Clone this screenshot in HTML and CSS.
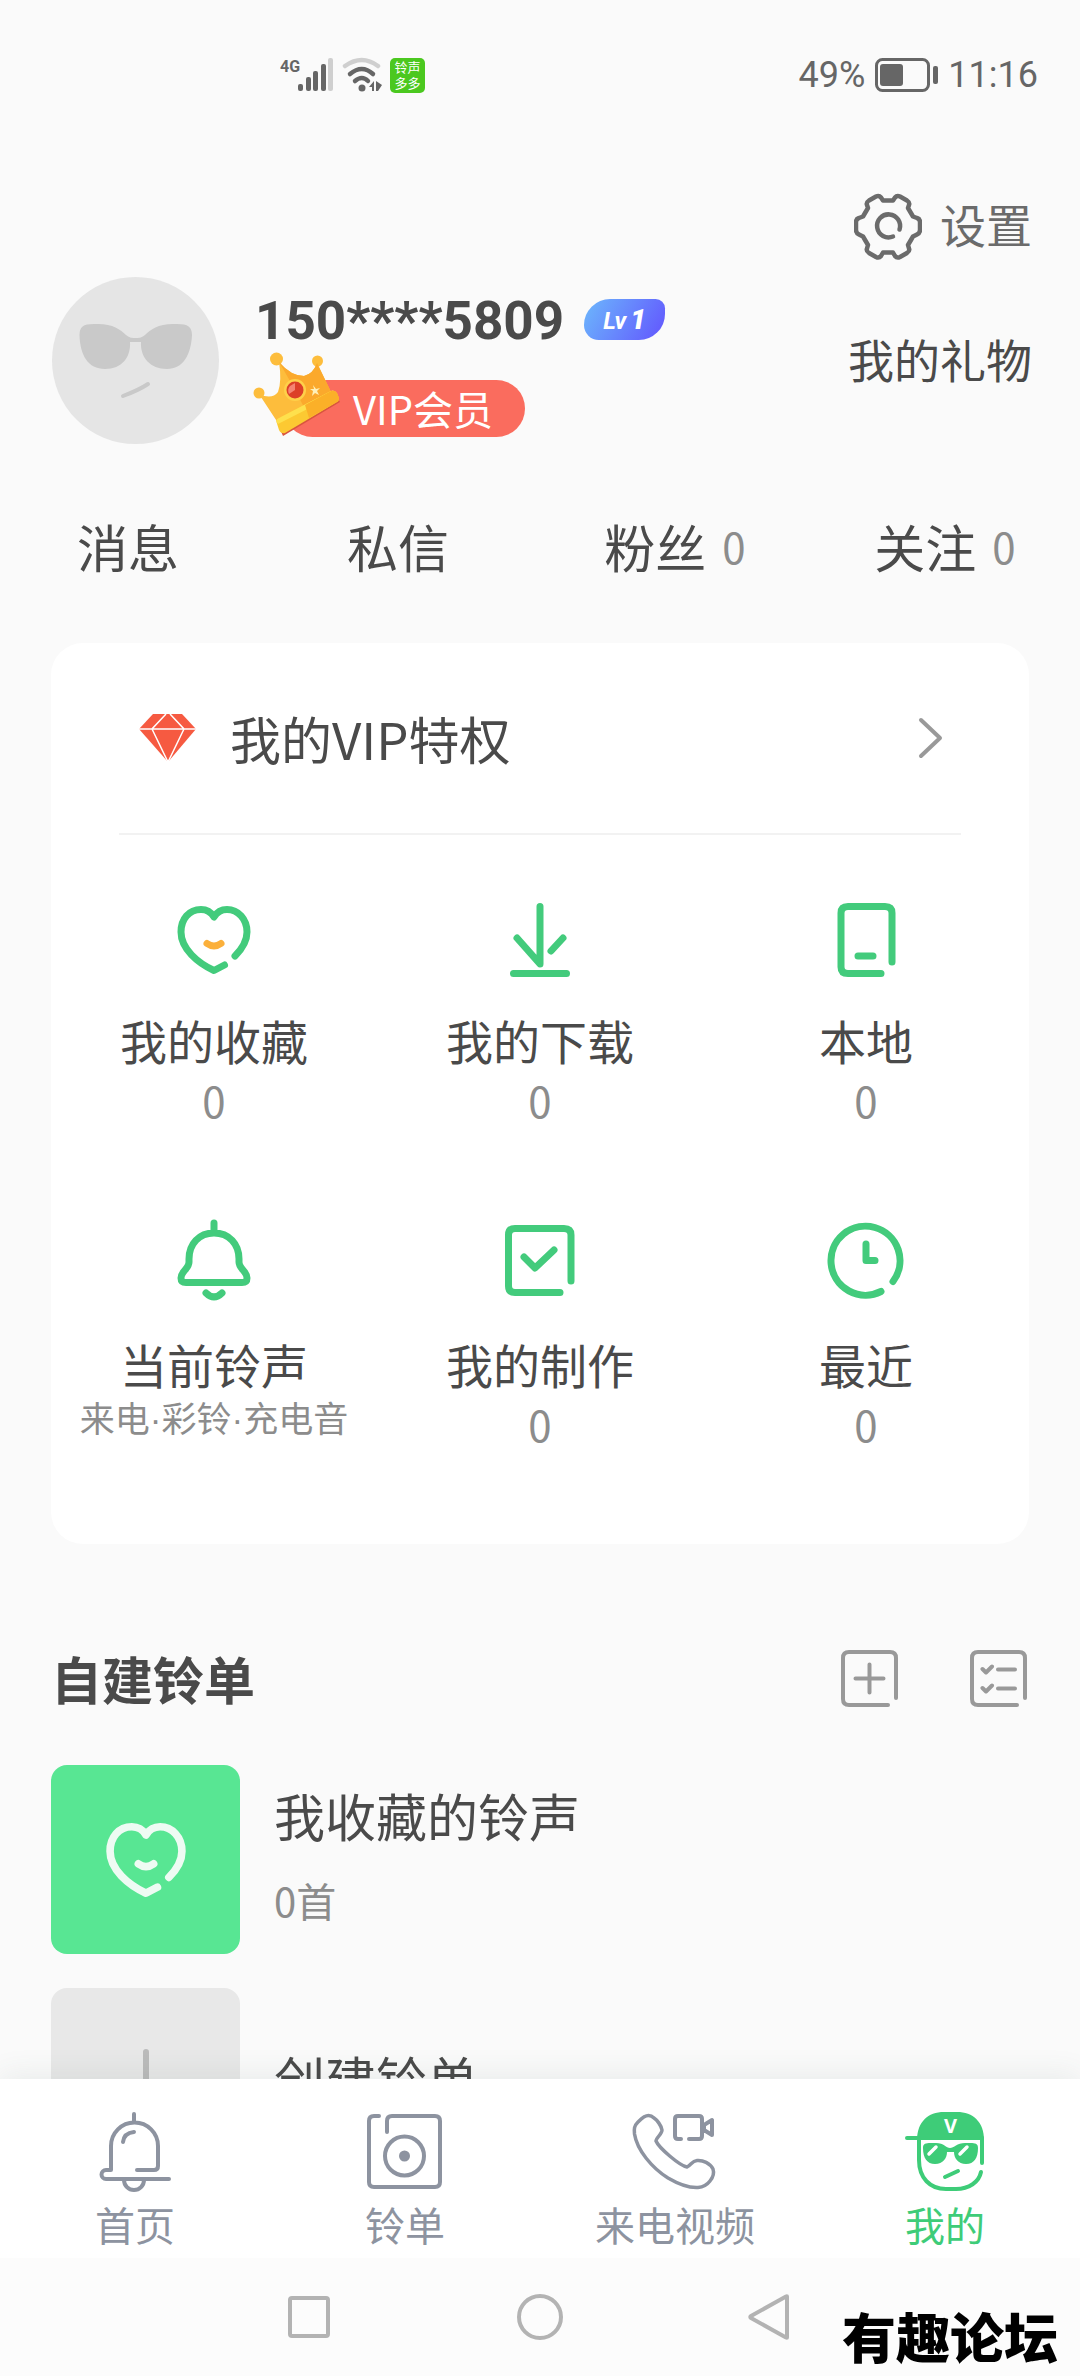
FILE: index.html
```html
<!DOCTYPE html>
<html lang="zh-CN">
<head>
<meta charset="utf-8">
<meta name="viewport" content="width=device-width, initial-scale=1">
<title>我的</title>
<link rel="stylesheet" href="styles.css">
</head>
<body>
<svg class="defs" width="0" height="0" aria-hidden="true">
  <symbol id="heart" viewBox="0 0 90 90">
    <path d="M66 61C74 53 78 46 78 37C78 24 69 14.500 58 14.500C52 14.500 48 17 45 22C42 17 38 14.500 32 14.500C20 14.500 12 24 12 37C12 54 29 68 45 75.500L55.500 70"/>
    <path class="smile" d="M38 48.500Q45 53.500 52 48.500"/>
  </symbol>
</svg>

<div class="status-bar">
  <div class="status-left">
    <svg width="54" height="40" viewBox="0 -2 54 40" aria-label="4G">
      <text class="net-label" x="0" y="15">4G</text>
      <g fill="#666"><rect x="18" y="27" width="5" height="7" rx="2"/><rect x="26" y="20" width="5" height="14" rx="2"/><rect x="33" y="14" width="5" height="20" rx="2"/><rect x="41" y="7" width="5" height="27" rx="2"/></g>
      <rect x="48" y="1" width="5" height="33" rx="2" fill="#cfcfcf"/>
    </svg>
    <svg width="40" height="36" viewBox="0 0 40 36" fill="none" stroke-linecap="round" stroke-width="4.500" aria-hidden="true">
      <path d="M3 9Q20 -3 36 9" stroke="#cfcfcf"/>
      <path d="M8 17Q20 7 31 17M13 24Q20 18 26 24" stroke="#666"/>
      <circle cx="20" cy="31" r="3.500" fill="#666"/>
      <path d="M27 30L32 24V34H30V30ZM34 24L40 28L36 34H34Z" fill="#666"/>
    </svg>
    <span class="app-badge">铃声<br>多多</span>
  </div>
  <div class="status-right">
    <span>49%</span>
    <svg width="63" height="34" viewBox="0 0 63 34" aria-hidden="true">
      <rect x="1.500" y="1.500" width="52" height="31" rx="6" fill="none" stroke="#666" stroke-width="3"/>
      <rect x="5" y="6" width="23" height="22" rx="3" fill="#666"/>
      <rect x="58" y="8" width="5" height="18" rx="2" fill="#666"/>
    </svg>
    <span>11:16</span>
  </div>
</div>

<main class="content">
  <header>
    <a class="settings" href="#settings">
      <svg width="68" height="67" viewBox="0 0 68 67" fill="none" stroke="#6b6b6b" stroke-width="4.500" stroke-linecap="round" stroke-linejoin="round" aria-hidden="true">
        <path d="M29 7.500H39L41 4.500Q43 2 46 3.500L53 7.500Q56 9.500 55 12L54 15L59 23.500L63 25Q66 26 66 29V37Q66 40 63 41.500L59 43.500L54 52L55 55.500Q56 58 53 60L46 64Q43 65.500 41 63L39 59.500H29L27 63Q25 65.500 22 64L15 60Q12 58 13 55.500L14 52L9 43.500L5 41.500Q2 40 2 37V29Q2 26 5 25L9 23.500L14 15L13 12Q12 9.500 15 7.500L22 3.500Q25 2 27 4.500Z"/>
        <path d="M45.500 36.500A11.500 11.500 0 1 0 39 43.500"/>
      </svg>
      <span class="link-text">设置</span>
    </a>
    <section class="profile">
      <svg class="avatar" width="167" height="167" viewBox="0 0 167 167" role="img" aria-label="头像">
        <circle cx="83.500" cy="83.500" r="83.500" fill="#e5e5e5"/>
        <path d="M27.500 58C27.500 50 31 47 42 47C60 46 68 52 74 58C78 61 80 61 83.500 61C87 61 89 61 93 58C99 52 107 46 125 47C136 47 140 50 140 58C139 78 131 92 115 92C98 92 88 80 89 65H78C79 80 70 92 53 92C36 92 28 78 27.500 58Z" fill="#c9c9c9"/>
        <path d="M71 119Q87 113 96 107" fill="none" stroke="#c9c9c9" stroke-width="4" stroke-linecap="round"/>
      </svg>
      <div class="identity">
        <div class="name-row">
          <h1 class="name">150****5809</h1>
          <span class="level">Lv<b>1</b></span>
        </div>
        <a class="vip-pill" href="#vip">
          <svg class="crown" width="88" height="86" viewBox="0 0 88 86" aria-hidden="true">
            <path d="M24 70L82 42L87 50L30 84Z" fill="#d9543f"/>
            <g fill="#fdbd3c"><circle cx="23.500" cy="7" r="6.500"/><circle cx="64.500" cy="9" r="5.500"/><circle cx="6" cy="41" r="5.500"/>
            <path d="M6 42Q19 48 25 40Q29 29 26 10Q38 24 51 24Q60 22 64 11L79 42L25 71Z"/></g>
            <path d="M26 10Q38 24 51 24Q60 22 64 11L79 42L52 57Q38 30 26 10Z" fill="#fba92c"/>
            <path d="M23.500 70Q23 67 26 66L78 39Q82 38 84 41L86 46Q86 49 84 50L32 81Q28 82 26 78Z" fill="#fcc932"/>
            <path d="M25 72L84 42L81 39Q80 38 78 39L26 66Q23 67 23.500 70Z" fill="#fee04d"/>
            <path d="M52 53L78 39Q82 38 84 41L86 46Q86 49 84 50L56 66Z" fill="#fbb028"/>
            <circle cx="42" cy="38" r="11" fill="#fed04a"/><circle cx="42" cy="38" r="8.500" fill="#dc3f28"/>
            <path d="M37 34L42 31V38L36 42Q34 37 37 34Z" fill="#f58472"/>
            <path d="M60 33L63 37L67 36L64 39L66 43L62 41L59 44L60 39L57 37L61 37Z" fill="#fff0b8"/>
          </svg>
          VIP会员
        </a>
      </div>
      <a class="gifts link-text" href="#gifts">我的礼物</a>
    </section>
  </header>

  <nav class="social">
    <a class="plain" href="#messages">消息</a>
    <a class="plain" href="#chats">私信</a>
    <a href="#fans">粉丝<span class="count">0</span></a>
    <a href="#following">关注<span class="count">0</span></a>
  </nav>

  <section class="card">
    <a class="vip-row" href="#privileges">
      <svg width="57" height="50" viewBox="0 0 57 50" aria-hidden="true">
        <path d="M14 1H43L57 16L29 49L0 16Z" fill="#f65a41"/>
        <path d="M0 16H57M27 1L13 16L29 49L45 16L31 1" fill="none" stroke="#fff" stroke-width="1.500"/>
      </svg>
      <span class="vip-title">我的VIP特权</span>
      <svg width="25" height="42" viewBox="0 0 25 42" fill="none" stroke="#999" stroke-width="4" stroke-linecap="round" stroke-linejoin="round" aria-hidden="true"><path d="M3 3L22 21L3 39"/></svg>
    </a>
    <div class="grid">
      <a class="cell" href="#favorites">
        <svg class="icon" viewBox="0 0 90 90" aria-hidden="true"><use href="#heart"/></svg>
        <span class="label">我的收藏</span><span class="count">0</span>
      </a>
      <a class="cell" href="#downloads">
        <svg class="icon" viewBox="0 0 90 90" aria-hidden="true"><path d="M45 11.500V69L22 43M68 43L56 56M18.500 78.500H71.500"/></svg>
        <span class="label">我的下载</span><span class="count">0</span>
      </a>
      <a class="cell" href="#local">
        <svg class="icon" viewBox="0 0 90 90" aria-hidden="true"><path d="M71 67V18Q71 11.500 64 11.500H27Q20 11.500 20 18V72Q20 78.500 27 78.500H60M37 61H52"/></svg>
        <span class="label">本地</span><span class="count">0</span>
      </a>
      <a class="cell" href="#current">
        <svg class="icon" viewBox="0 0 90 90" aria-hidden="true"><path d="M45 4V14M45 14C30 14 20 25 20 40V43C20 50 12 52 12 59Q12 63.500 17 63.500H73Q78 63.500 78 59C78 52 70 50 70 43V40C70 25 60 14 45 14ZM37 74Q45 82 53 74"/></svg>
        <span class="label">当前铃声</span><span class="note">来电·彩铃·充电音</span>
      </a>
      <a class="cell" href="#works">
        <svg class="icon" viewBox="0 0 90 90" aria-hidden="true"><path d="M76 62V16Q76 9.500 69 9.500H20Q13.500 9.500 13.500 16V67Q13.500 73.500 20 73.500H65M29 38L40 49L59 31"/></svg>
        <span class="label">我的制作</span><span class="count">0</span>
      </a>
      <a class="cell" href="#recent">
        <svg class="icon" viewBox="0 0 90 90" aria-hidden="true"><path d="M72 62.500A34.500 34.500 0 1 0 60 72.500M45 25V41.500H54"/></svg>
        <span class="label">最近</span><span class="count">0</span>
      </a>
    </div>
  </section>

  <section class="playlists">
    <div class="section-head">
      <h2>自建铃单</h2>
      <button type="button" aria-label="新建铃单">
        <svg class="tool" viewBox="0 0 57 57"><path d="M55 48V8Q55 2 49 2H8Q2 2 2 8V49Q2 55 8 55H47M14.500 28.500H42.500M28.500 14.500V42.500"/></svg>
      </button>
      <button type="button" aria-label="管理铃单">
        <svg class="tool" viewBox="0 0 57 57"><path d="M55 48V8Q55 2 49 2H8Q2 2 2 8V49Q2 55 8 55H47M12.500 19L16 22.500L22 16.500M28 19.500H45M12.500 38L16 41.500L22 35.500M28 38.500H45"/></svg>
      </button>
    </div>
    <ul class="list">
      <li><a class="item" href="#liked">
        <span class="thumb liked"><svg class="icon" viewBox="0 0 90 90" aria-hidden="true"><use href="#heart"/></svg></span>
        <span class="item-text"><span class="item-title">我收藏的铃声</span><span class="item-sub">0首</span></span>
      </a></li>
      <li><a class="item" href="#create">
        <span class="thumb"><svg width="68" height="68" viewBox="0 0 68 68" stroke="#bbb" stroke-width="6" stroke-linecap="round" aria-hidden="true"><path d="M34 3V65M3 34H65"/></svg></span>
        <span class="item-text"><span class="item-title">创建铃单</span></span>
      </a></li>
    </ul>
  </section>
</main>

<nav class="tab-bar">
  <a href="#home">
    <svg class="tab-icon" viewBox="0 0 90 80" aria-hidden="true"><path d="M44 2V10M21 58V34A23.500 23.500 0 0 1 68 34V54Q68 58 64 58H47M21 58H16A4.500 4.500 0 0 0 16 67H79M34 68A9 9 0 0 0 54 68M33 30Q34 21 44 20"/></svg>
    首页
  </a>
  <a href="#playlists">
    <svg class="tab-icon" viewBox="0 0 90 80" aria-hidden="true"><path d="M19 4H14Q9 4 9 9V70Q9 75 14 75H75Q80 75 80 70V9Q80 4 75 4H32Q27 4 27 9V20"/><circle cx="44.500" cy="44" r="19.500"/><circle cx="44.500" cy="44" r="5.500" fill="#8d93a0" stroke="none"/></svg>
    铃单
  </a>
  <a href="#video">
    <svg class="tab-icon" viewBox="0 0 90 80" aria-hidden="true"><path stroke-width="3.500" d="M18.500 3.500C14 3.500 11 7 8 10C4 14 4 17 4.500 22C7 38 22 56 38 66C50 73 60 76 68 75.500C74 75 77 73 80 69C84 64 84 60 83 57C80 51 73 48 67 48.500C62 49 61 53 57 55C50 54 29 36 26 29C26 26 32 22 32 18C31 13 27 8 24 6C22 4 20 3.500 18.500 3.500Z"/><path d="M51 27H48Q45 27 45 24V7Q45 4 48 4H69Q72 4 72 7V24Q72 27 69 27H59M74 13L82 8V23L74 18Z"/></svg>
    来电视频
  </a>
  <a class="active" href="#me" aria-current="page">
    <svg class="tab-icon" viewBox="0 0 90 80" aria-hidden="true">
      <path d="M17 28C17 10 28 0 44 0H57C73 0 84 10 84 28Z" fill="#3ecc78" stroke="none"/>
      <path d="M7 26H19M19 26V48C19 66 30 77 46 77H56C69 77 79 70 81 60M82 26V51M45 65L58 59"/>
      <path d="M23 36C23 30 28 31 36 31C44 31 46 36 50 36C54 36 57 31 65 31C73 31 78 30 78 36C78 46 74 52 66 52C58 52 54 46 54 40H47C47 46 43 52 35 52C27 52 23 46 23 36Z" fill="#3ecc78" stroke="none"/>
      <path d="M29 42L36 35M60 42L67 35" stroke="#fff" stroke-width="3.500"/>
      <text class="cap-letter" x="50.500" y="21" text-anchor="middle">V</text>
    </svg>
    我的
  </a>
</nav>

<footer class="system-nav">
  <button type="button" aria-label="最近任务"><svg viewBox="0 0 46 46"><rect x="4" y="4" width="38" height="38" rx="2"/></svg></button>
  <button type="button" aria-label="主屏幕"><svg viewBox="0 0 46 46"><circle cx="23" cy="23" r="21"/></svg></button>
  <button type="button" aria-label="返回"><svg viewBox="0 0 46 46"><path d="M39 2.500V43.500Q39 44 38 43.500L3 24Q1.500 23 3 22L38 2.500Q39 2 39 2.500Z"/></svg></button>
  <span class="watermark">有趣论坛</span>
</footer>
</body>
</html>
```
FILE: styles.css
```css
* { box-sizing: border-box; }

body {
  margin: 0;
  height: 100vh;
  display: flex;
  flex-direction: column;
  background: #fafafa;
  color: #4a4a4a;
  font-family: "Noto Sans CJK SC", sans-serif;
}

a { color: inherit; text-decoration: none; }
button { padding: 0; border: 0; background: none; }
svg { display: block; flex: none; }
h1, h2, ul { margin: 0; padding: 0; }
ul { list-style: none; }
.defs { position: absolute; }

/* Status bar */
.status-bar {
  flex: none;
  height: 150px;
  padding: 0 42px 0 280px;
  display: flex;
  align-items: center;
  justify-content: space-between;
  color: #666;
  font: 36px/40px Roboto, sans-serif;
}
.status-left { display: flex; align-items: center; gap: 8px; }
.status-right { display: flex; align-items: center; gap: 10px; }
.net-label { font: bold 16px Roboto, sans-serif; fill: #666; }
.app-badge {
  width: 35px;
  height: 35px;
  padding-top: 1px;
  border-radius: 5px;
  background: #4bc81f;
  color: #fff;
  font: 13px/16px "Noto Sans CJK SC", sans-serif;
  text-align: center;
}

/* Scrolling content */
.content { flex: 1; min-height: 0; overflow: hidden; }

.settings {
  height: 76px;
  margin: 38px 48px 13px auto;
  width: fit-content;
  display: flex;
  align-items: center;
  gap: 18px;
  color: #6b6b6b;
}
.link-text { padding-bottom: 6px; font-size: 46px; line-height: 70px; }

.profile { display: flex; padding: 0 48px 0 52px; }
.identity { flex: 1; padding: 12px 0 0 36px; }
.name-row { display: flex; align-items: center; gap: 20px; height: 60px; }
.name { padding-top: 4px; font: bold 53px/60px Roboto, sans-serif; }
.level {
  width: 81px;
  height: 41px;
  border-radius: 28px 10px 28px 16px;
  background: linear-gradient(120deg, #6cb8fc, #6254fe);
  color: #fff;
  font: italic bold 24px/41px Roboto, sans-serif;
  text-align: center;
}
.level b { margin-left: 4px; font-size: 28px; }
.vip-pill {
  position: relative;
  display: block;
  width: fit-content;
  margin: 31px 0 0 29px;
  padding: 0 32px 0 69px;
  border-radius: 29px;
  background: #fa6c5e;
  color: #fff;
  font-size: 40px;
  line-height: 57px;
}
.crown { position: absolute; left: -31px; bottom: -1px; }
.gifts { align-self: center; }

.social {
  display: grid;
  grid-template-columns: repeat(4, 1fr);
  margin-top: 60px;
  font-size: 51px;
  line-height: 84px;
}
.social a { display: flex; justify-content: center; gap: 16px; }
.social .plain { padding-right: 14px; }
.count { color: #8c8c8c; font-size: 42px; }

/* Shortcut card */
.card {
  margin: 55px 51px 0;
  padding-bottom: 61px;
  border-radius: 32px;
  background: #fff;
}
.vip-row {
  height: 192px;
  margin: 0 68px;
  padding: 0 18px 0 20px;
  display: flex;
  align-items: center;
  border-bottom: 2px solid #f2f2f2;
}
.vip-title { flex: 1; padding-left: 34px; font-size: 51px; line-height: 70px; }
.grid { display: grid; grid-template-columns: repeat(3, 1fr); }
.cell {
  height: 324px;
  padding-top: 60px;
  display: flex;
  flex-direction: column;
  align-items: center;
  line-height: 60px;
}
.icon {
  width: 90px;
  height: 90px;
  fill: none;
  stroke: #43cb7c;
  stroke-width: 7;
  stroke-linecap: round;
  stroke-linejoin: round;
}
.label { margin-top: 25px; font-size: 47px; }
.note {
  color: #8c8c8c;
  font-family: "Liberation Sans", "Noto Sans CJK SC", sans-serif;
  font-size: 35px;
  line-height: 52px;
  white-space: nowrap;
}

/* Playlists */
.playlists { padding: 94px 51px 0; }
.section-head { display: flex; align-items: center; gap: 72px; height: 80px; padding-right: 2px; }
.section-head h2 { flex: 1; font-size: 51px; line-height: 80px; }
.tool {
  width: 57px;
  height: 57px;
  fill: none;
  stroke: #999;
  stroke-width: 4;
  stroke-linecap: round;
  stroke-linejoin: round;
}
.list { display: grid; gap: 34px; margin-top: 47px; }
.item { display: flex; gap: 34px; }
.thumb {
  width: 189px;
  height: 189px;
  display: flex;
  align-items: center;
  justify-content: center;
  border-radius: 16px;
  background: #e8e8e8;
}
.liked { --smile: #eefbf3; background: #58e693; }
.liked .icon { width: 98px; height: 98px; stroke: #eefbf3; }
.smile { stroke: var(--smile, #fbb03b); }
.item-text {
  display: flex;
  flex-direction: column;
  justify-content: center;
  gap: 20px;
  padding-bottom: 10px;
}
.item-title { font-size: 51px; line-height: 70px; }
.item-sub { color: #8c8c8c; font-size: 40px; line-height: 60px; }

/* Bottom tabs */
.tab-bar {
  position: relative;
  flex: none;
  display: grid;
  grid-template-columns: repeat(4, 1fr);
  padding: 33px 0 9px;
  background: #fff;
  box-shadow: 0 -4px 28px rgba(60, 90, 75, 0.09);
  color: #8d93a0;
  font-size: 40px;
  line-height: 50px;
}
.tab-bar a { display: flex; flex-direction: column; align-items: center; gap: 7px; }
.tab-icon {
  width: 90px;
  height: 80px;
  fill: none;
  stroke: currentColor;
  stroke-width: 4;
  stroke-linecap: round;
  stroke-linejoin: round;
}
.tab-bar .active { color: #3ecc78; }
.cap-letter { font: bold 20px "Open Sans", sans-serif; fill: #fff; stroke: none; }

/* System navigation */
.system-nav {
  position: relative;
  flex: none;
  height: 118px;
  display: flex;
  align-items: center;
  justify-content: center;
  gap: 185px;
  background: #fcfcfc;
}
.system-nav svg {
  width: 46px;
  height: 46px;
  fill: none;
  stroke: #b3b3b3;
  stroke-width: 4;
  stroke-linejoin: round;
}
.watermark {
  position: absolute;
  right: 22px;
  bottom: 0;
  color: #000;
  font-size: 54px;
  font-weight: 900;
  line-height: 80px;
}
```
